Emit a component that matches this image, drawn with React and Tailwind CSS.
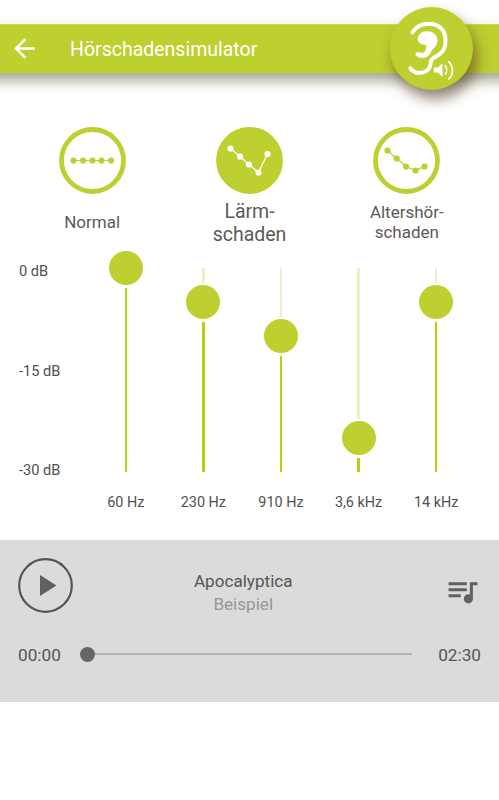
import React, { useState } from "react";
import { MdArrowBack, MdQueueMusic } from "react-icons/md";

const PRESETS = [
  {
    id: "normal",
    lines: ["Normal"],
    points: [[14.5, 33.5], [24, 33.5], [33.5, 33.5], [42.5, 33.5], [52, 33.5]],
  },
  {
    id: "laerm",
    lines: ["Lärm-", "schaden"],
    points: [[14.5, 21.5], [24, 29.5], [33, 37.5], [42.5, 45.5], [51.5, 27]],
  },
  {
    id: "alter",
    lines: ["Altershör-", "schaden"],
    points: [[14.5, 23.5], [23.7, 31.5], [33, 39.5], [42.5, 43.5], [51.5, 39.5]],
  },
];

const BANDS = [
  { label: "60 Hz", db: 0 },
  { label: "230 Hz", db: -5 },
  { label: "910 Hz", db: -10 },
  { label: "3,6 kHz", db: -25 },
  { label: "14 kHz", db: -5 },
];

const PX_PER_DB = 6.8;

const EarLogo = () => (
  <svg viewBox="60 22 248 248" className="size-full" fill="none" stroke="white" strokeLinecap="round">
    <path
      d="M127 98C137 81 155 72 176 72C208 72 226 93 226 122C226 147 218 158 201 168C185 176 182 179 181 192C179 211 163 219 146 219C135 219 127 213 121 205"
      strokeWidth="12"
    />
    <path
      d="M144 120C142 104 156 95 172 95C190 95 201 107 201 122C201 136 193 143 186 149C182 154 181 160 176 166C168 175 148 177 139 168C133 161 139 155 149 159C159 162 163 160 166 152C168 146 171 142 169 138C165 133 160 134 154 132C148 130 144 126 144 120Z"
      fill="white"
      strokeWidth="1.5"
    />
    <path d="M191 203H203L217 190V231L203 218H191Z" fill="white" stroke="none" />
    <path d="M225 197C231 204 231 216 225 223" strokeWidth="4.5" />
    <path d="M235 185C250 198 250 224 236 237" strokeWidth="5" />
  </svg>
);

const Header = () => (
  <header className="relative mt-6 -mx-8 px-8 h-[49px] flex items-center bg-[#becf30] border-t border-[#cbd94f] shadow-[0_8px_12px_0px_rgba(75,85,40,0.5)]">
    <button type="button" className="ml-[9px] -mt-0.5 text-white text-[31px]">
      <MdArrowBack />
    </button>
    <h1 className="ml-[30px] pt-px text-[19.5px] leading-none text-white">Hörschadensimulator</h1>
    <div className="absolute left-[422px] -top-[18px] size-[83px] rounded-full bg-[#becf30] shadow-[4px_9px_14px_0px_rgba(80,55,30,0.6)]">
      <EarLogo />
    </div>
  </header>
);

const Preset = ({ preset, active, onSelect }) => (
  <button type="button" onClick={onSelect} className="flex-1 flex flex-col items-center">
    <svg viewBox="0 0 67 67" className={`size-[67px] ${active ? "text-white" : "text-[#becf30]"}`}>
      <circle cx="33.5" cy="33.5" r="31" fill={active ? "#becf30" : "white"} stroke="#becf30" strokeWidth="4.8" />
      <polyline points={preset.points.join(" ")} fill="none" stroke="currentColor" strokeWidth="1.2" />
      {preset.points.map(([x, y]) => (
        <circle key={x} cx={x} cy={y} r="3.1" fill="currentColor" />
      ))}
    </svg>
    <span
      className={`flex flex-1 flex-col text-[#5a5a5a] ${
        active ? "pt-[7px] text-[19.5px] leading-[22.5px]" : "justify-center text-[17px] leading-5 pb-0.5"
      }`}
    >
      {preset.lines.map((line) => (
        <span key={line}>{line}</span>
      ))}
    </span>
  </button>
);

const BandSlider = ({ band }) => {
  const offset = -band.db * PX_PER_DB;

  return (
    <div className="flex-1 flex flex-col items-center">
      <div className="h-[221px] flex flex-col items-center">
        <div className="h-[17px] shrink-0" />
        {/* the part above the knob, 19px short of its centre */}
        <div className="w-[2.5px] shrink-0 bg-[#ecf2c4]" style={{ height: Math.max(offset - 19, 0) }} />
        <div className={`size-[34px] shrink-0 rounded-full bg-[#becf30] mb-[3px] ${offset > 0 ? "mt-0.5" : "-mt-[17px]"}`} />
        <div className="w-[2.5px] flex-1 bg-[#b9d00f]" />
      </div>
      <span className="mt-[21px] text-[14.4px] leading-5 whitespace-nowrap">{band.label}</span>
    </div>
  );
};

const Equalizer = () => (
  <section className="flex pl-[19px] pr-6 text-[14.6px] text-[#505050]">
    <div className="w-[68px] h-[229px] pt-2.5 flex flex-col justify-between leading-5">
      <span>0 dB</span>
      <span>-15 dB</span>
      <span>-30 dB</span>
    </div>
    <div className="flex-1 flex">
      {BANDS.map((band) => (
        <BandSlider key={band.label} band={band} />
      ))}
    </div>
  </section>
);

const Player = () => (
  <section className="mt-[27px] h-[162px] bg-[#dbdbdb] px-[18px] pt-[18px] text-[#555]">
    <div className="h-[57px] flex items-start">
      <button type="button" className="size-[55px]">
        <svg viewBox="0 0 55 55" className="size-full">
          <circle cx="27.5" cy="27.5" r="26.3" fill="none" stroke="#555" strokeWidth="2.2" />
          <path d="M22 17V38L38.5 27.5Z" fill="#616161" />
        </svg>
      </button>
      <div className="flex-1 flex flex-col items-center pt-3 pr-[31px] text-[17.1px] leading-[23px]">
        <span>Apocalyptica</span>
        <span className="text-[#979797]">Beispiel</span>
      </div>
      <button type="button" className="pt-[15px] -ml-px pr-px text-[36.5px] text-[#616161]">
        <MdQueueMusic />
      </button>
    </div>
    <div className="mt-7 flex items-center text-[17.2px] leading-6">
      <span className="w-[61.5px]">00:00</span>
      <div className="flex flex-1 items-center -mt-0.5">
        <div className="size-[15px] rounded-full bg-[#656565]" />
        <div className="h-[2.5px] flex-1 bg-[#b5b5b5]" />
      </div>
      <span className="w-[69px] text-right">02:30</span>
    </div>
  </section>
);

const App = () => {
  const [active, setActive] = useState("laerm");

  return (
    <div className="h-screen overflow-hidden flex flex-col bg-white font-['Roboto',sans-serif]">
      <Header />
      <div className="mt-[54px] h-[124px] flex px-[13.5px]">
        {PRESETS.map((preset) => (
          <Preset
            key={preset.id}
            preset={preset}
            active={preset.id === active}
            onSelect={() => setActive(preset.id)}
          />
        ))}
      </div>
      <Equalizer />
      <Player />
    </div>
  );
};

export default App;
